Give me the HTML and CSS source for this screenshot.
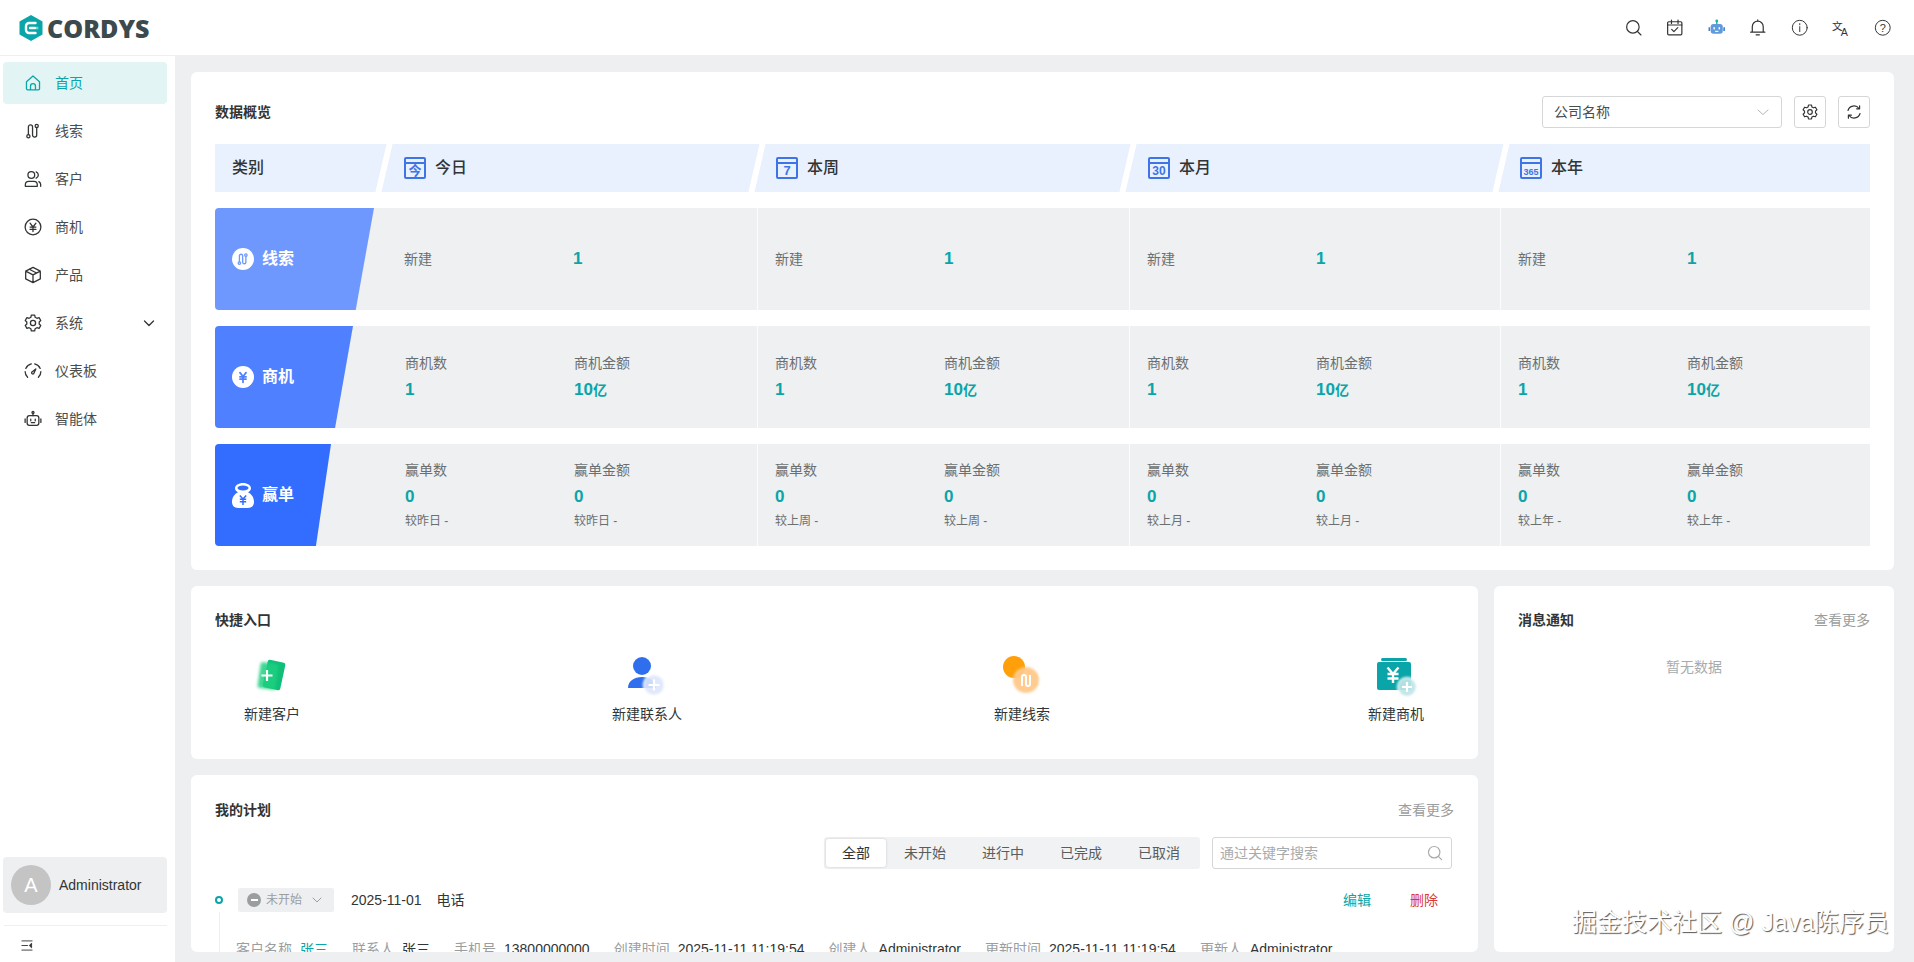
FILE: index.html
```html
<!DOCTYPE html>
<html lang="zh-CN">
<head>
<meta charset="utf-8">
<title>CORDYS</title>
<link rel="stylesheet" href="styles.css">
</head>
<body>
<svg class="sprite" xmlns="http://www.w3.org/2000/svg">
  <symbol id="i-lead" viewBox="0 0 16 16"><path d="M3.900 11.200V4.400a1.850 1.850 0 0 1 3.700 0v7.200a1.850 1.850 0 0 0 3.700 0V5"/><circle cx="3.900" cy="12.700" r="1.400"/><circle cx="11.300" cy="3.500" r="1.400"/></symbol>
  <symbol id="i-yen" viewBox="0 0 16 16"><circle cx="8" cy="8" r="7"/><path d="M5.400 4.600 8 8l2.600-3.400M5.400 8.100h5.200M5.400 10.200h5.200M8 8v4"/></symbol>
  <symbol id="i-gear" viewBox="0 .5 16 16"><path d="M6.500 1.500h3l.4 1.900 1.600.9 1.900-.6 1.500 2.600-1.400 1.300v1.800l1.400 1.300-1.500 2.600-1.900-.6-1.600.9-.4 1.900h-3l-.4-1.900-1.600-.9-1.900.6-1.500-2.600 1.400-1.300V7.600L1.100 6.300l1.500-2.600 1.900.6 1.600-.9z"/><circle cx="8" cy="8.500" r="2.300"/></symbol>
  <symbol id="i-search" viewBox="0 0 16 16"><circle cx="7.200" cy="7.200" r="5.700"/><path d="m11.400 11.400 3.200 3.200"/></symbol>
  <symbol id="i-robot" viewBox="0 0 16 16"><rect x="2.800" y="5" width="10.400" height="8.600" rx="2"/><path d="M8 5V3M1 8v3M15 8v3M6 8.200v1.400M10 8.200v1.400M6.500 11.200h3"/><circle cx="8" cy="2.200" r=".9"/></symbol>
</svg>

<header class="topbar">
  <div class="logo">
    <svg class="logo-mark" viewBox="0 0 24 26"><path class="logo-hex" d="M12 0 23.500 6.500V19.500L12 26 .5 19.500V6.500Z"/><path class="logo-c" d="M16.500 8H10a3 3 0 0 0-3 3v4a3 3 0 0 0 3 3h6.500"/><circle class="logo-dot" cx="18" cy="13" r="1.600"/><path class="logo-c" d="M11 13h5"/></svg>
    <span class="logo-text">CORDYS</span>
  </div>
  <div class="top-icons">
    <svg class="ico ico-top"><use href="#i-search"/></svg>
    <svg class="ico ico-top" viewBox="0 0 16 16"><rect x="1.500" y="2.500" width="13" height="12" rx="1"/><path d="M1.500 5.500h13M5 1v3M11 1v3M5.200 9.500l2 2 3.600-3.600"/></svg>
    <svg class="ico-color" viewBox="0 0 16 16"><path class="bot-antenna" d="M7.300 1.500h1.400v3H7.300z"/><circle class="bot-antenna" cx="8" cy="1.800" r="1.300"/><rect class="bot-head" x="2.500" y="4.500" width="11" height="9" rx="2.500"/><path class="bot-side" d="M.5 7.500h1.500v3.500H.5zM14 7.500h1.500v3.500H14z"/><rect class="bot-face" x="5" y="7.500" width="1.300" height="2"/><rect class="bot-face" x="9.700" y="7.500" width="1.300" height="2"/><rect class="bot-face" x="6.500" y="10.800" width="3" height="1"/></svg>
    <svg class="ico ico-top" viewBox="0 0 16 16"><path d="M3 12V7a5 5 0 0 1 10 0v5M1.500 12h13M6.500 14.500h3M8 .8V2"/></svg>
    <svg class="ico ico-top ico-thin" viewBox="0 0 16 16"><circle cx="8" cy="8" r="6.800"/><path d="M8 7v4.500M8 4.200v1.100"/></svg>
    <svg class="svg-label" viewBox="0 0 18 18"><text class="tr-a" x="0" y="11">文</text><text class="tr-b" x="9" y="17">A</text></svg>
    <svg class="svg-label" viewBox="0 0 16 16"><circle class="help-ring" cx="8" cy="8" r="6.800"/><text class="help-q" x="8" y="11.500">?</text></svg>
  </div>
</header>

<div class="shell">
  <aside class="sidebar">
    <nav class="menu">
      <a class="menu-item is-active">
        <svg class="ico" viewBox="0 0 16 16"><path d="M2.200 6.800 8 1.800l5.800 5v6.400a1 1 0 0 1-1 1H3.200a1 1 0 0 1-1-1zM5.800 14.200v-3.400a2.200 2.200 0 0 1 4.400 0v3.400"/></svg>
        <span>首页</span>
      </a>
      <a class="menu-item"><svg class="ico"><use href="#i-lead"/></svg><span>线索</span></a>
      <a class="menu-item">
        <svg class="ico" viewBox="0 0 16 16"><circle cx="6.500" cy="4.500" r="3"/><path d="M1.200 14.500v-1.300a3 3 0 0 1 3-3h4.600a3 3 0 0 1 3 3v1.300zM10.800 1.700a3 3 0 0 1 0 5.600M14.800 14.500v-1.800a3 3 0 0 0-1.600-2.400"/></svg>
        <span>客户</span>
      </a>
      <a class="menu-item"><svg class="ico"><use href="#i-yen"/></svg><span>商机</span></a>
      <a class="menu-item">
        <svg class="ico" viewBox="0 0 16 16"><path d="M8 1.200 14.500 4.500v7L8 14.800 1.500 11.500v-7zM1.500 4.500 8 7.900l6.500-3.400M8 7.900v6.900M4.700 2.900l6.500 3.300"/></svg>
        <span>产品</span>
      </a>
      <a class="menu-item">
        <svg class="ico"><use href="#i-gear"/></svg><span>系统</span>
        <svg class="ico menu-caret" viewBox="0 0 12 12"><path d="m1.500 4 4.500 4.500L10.500 4"/></svg>
      </a>
      <a class="menu-item">
        <svg class="ico" viewBox="0 0 16 16"><path d="M3.200 13.600A7 7 0 0 1 1 8.500M1.600 5.700A7 7 0 0 1 6.500 1.700M9.500 1.700a7 7 0 0 1 4.900 4M15 8.500a7 7 0 0 1-2.200 5.100M6.800 9.200l3.700-3-1.900 4.300a1.200 1.200 0 0 1-1.800-1.300z"/></svg>
        <span>仪表板</span>
      </a>
      <a class="menu-item"><svg class="ico"><use href="#i-robot"/></svg><span>智能体</span></a>
    </nav>
    <div class="user-box">
      <div class="avatar">A</div>
      <span>Administrator</span>
    </div>
    <div class="collapse">
      <svg class="ico-collapse" viewBox="0 0 12 12"><path d="M0 1h12M0 11h12M0 6h7"/><path d="M11 3.500 8.500 6 11 8.500z"/></svg>
    </div>
  </aside>

  <main class="content">
    <section class="card overview">
      <div class="card-head">
        <h2 class="card-title">数据概览</h2>
        <div class="tools">
          <div class="select"><span>公司名称</span><svg class="ico select-caret" viewBox="0 0 12 12"><path d="m1 4 5 4.500L11 4"/></svg></div>
          <button class="icon-btn"><svg class="ico"><use href="#i-gear"/></svg></button>
          <button class="icon-btn"><svg class="ico" viewBox="0 0 16 16"><path d="M2 6.500A6.200 6.200 0 0 1 13 4.500M14 9.500A6.200 6.200 0 0 1 3 11.500M13.600 1.800v3h-3M2.400 14.200v-3h3"/></svg></button>
        </div>
      </div>

      <div class="range-bar">
        <div class="range range-type">类别</div>
        <div class="range range-today"><svg class="cal" viewBox="0 0 22 22"><rect class="cal-box" x="1" y="1" width="20" height="20" rx="1"/><path class="cal-box" d="M1 6h20"/><text class="cal-text" x="11" y="17.500">今</text></svg>今日</div>
        <div class="range range-mid"><svg class="cal" viewBox="0 0 22 22"><rect class="cal-box" x="1" y="1" width="20" height="20" rx="1"/><path class="cal-box" d="M1 6h20"/><text class="cal-text" x="11" y="18">7</text></svg>本周</div>
        <div class="range range-month"><svg class="cal" viewBox="0 0 22 22"><rect class="cal-box" x="1" y="1" width="20" height="20" rx="1"/><path class="cal-box" d="M1 6h20"/><text class="cal-text cal-sm" x="11" y="17.500">30</text></svg>本月</div>
        <div class="range range-last"><svg class="cal" viewBox="0 0 22 22"><rect class="cal-box" x="1" y="1" width="20" height="20" rx="1"/><path class="cal-box" d="M1 6h20"/><text class="cal-text cal-xs" x="11" y="17.500">365</text></svg>本年</div>
      </div>

      <div class="stat-row">
        <div class="cell cell-first">
          <div class="tag tag-lead"><span class="tag-ico"><svg class="ico ico-blue1"><use href="#i-lead"/></svg></span>线索</div>
          <div class="metric metric-inline"><span class="m-name">新建</span><span class="m-val">1</span></div>
        </div>
        <div class="cell"><div class="metric metric-inline"><span class="m-name">新建</span><span class="m-val">1</span></div></div>
        <div class="cell"><div class="metric metric-inline"><span class="m-name">新建</span><span class="m-val">1</span></div></div>
        <div class="cell cell-end"><div class="metric metric-inline"><span class="m-name">新建</span><span class="m-val">1</span></div></div>
      </div>

      <div class="stat-row">
        <div class="cell cell-first">
          <div class="tag tag-opp"><span class="tag-ico"><svg class="ico ico-blue2" viewBox="0 0 16 16"><path d="M4.500 3 8 7.500 11.500 3M4.500 7.800h7M4.500 10.400h7M8 7.500V14"/></svg></span>商机</div>
          <div class="metric"><span class="m-name">商机数</span><span class="m-val">1</span></div>
          <div class="metric"><span class="m-name">商机金额</span><span class="m-val">10<small>亿</small></span></div>
        </div>
        <div class="cell"><div class="metric"><span class="m-name">商机数</span><span class="m-val">1</span></div><div class="metric"><span class="m-name">商机金额</span><span class="m-val">10<small>亿</small></span></div></div>
        <div class="cell"><div class="metric"><span class="m-name">商机数</span><span class="m-val">1</span></div><div class="metric"><span class="m-name">商机金额</span><span class="m-val">10<small>亿</small></span></div></div>
        <div class="cell cell-end"><div class="metric"><span class="m-name">商机数</span><span class="m-val">1</span></div><div class="metric"><span class="m-name">商机金额</span><span class="m-val">10<small>亿</small></span></div></div>
      </div>

      <div class="stat-row">
        <div class="cell cell-first">
          <div class="tag tag-win"><svg class="bag" viewBox="0 0 22 25"><path class="bag-fill" d="M11 0c4.500 0 8 2.300 8 5.200 0 1.700-1.200 3.100-3 4 3.500 1.700 6 5.300 6 9.600C22 23 19.500 25 16 25H6c-3.500 0-6-2-6-6.200 0-4.300 2.500-7.900 6-9.600-1.800-.9-3-2.300-3-4C3 2.300 6.500 0 11 0z"/><ellipse class="bag-hole" cx="11" cy="5" rx="5.500" ry="2.400"/><path class="bag-cut" d="M7.800 12.500l3.200 3.500 3.200-3.500M7.800 16.200h6.400M7.800 18.700h6.400M11 16v6"/></svg>赢单</div>
          <div class="metric"><span class="m-name">赢单数</span><span class="m-val">0</span><span class="m-cmp">较昨日 -</span></div>
          <div class="metric"><span class="m-name">赢单金额</span><span class="m-val">0</span><span class="m-cmp">较昨日 -</span></div>
        </div>
        <div class="cell"><div class="metric"><span class="m-name">赢单数</span><span class="m-val">0</span><span class="m-cmp">较上周 -</span></div><div class="metric"><span class="m-name">赢单金额</span><span class="m-val">0</span><span class="m-cmp">较上周 -</span></div></div>
        <div class="cell"><div class="metric"><span class="m-name">赢单数</span><span class="m-val">0</span><span class="m-cmp">较上月 -</span></div><div class="metric"><span class="m-name">赢单金额</span><span class="m-val">0</span><span class="m-cmp">较上月 -</span></div></div>
        <div class="cell cell-end"><div class="metric"><span class="m-name">赢单数</span><span class="m-val">0</span><span class="m-cmp">较上年 -</span></div><div class="metric"><span class="m-name">赢单金额</span><span class="m-val">0</span><span class="m-cmp">较上年 -</span></div></div>
      </div>
    </section>

    <div class="lower">
      <div class="lower-main">
        <section class="card quick">
          <h2 class="card-title">快捷入口</h2>
          <div class="quick-list">
            <a class="quick-item">
              <svg class="q-ico" viewBox="0 0 40 40"><rect class="g-back" x="13" y="5" width="18" height="28" rx="2" transform="rotate(12 22 19)"/><rect class="g-front" x="7" y="7" width="18" height="26" rx="2" transform="rotate(8 16 20)"/><path class="q-plus" d="M15 14v11M9.500 19.500h11"/></svg>
              <span>新建客户</span>
            </a>
            <a class="quick-item">
              <svg class="q-ico" viewBox="0 0 40 40"><circle class="b-fill" cx="15" cy="10" r="9"/><path class="b-fill" d="M1 32c0-7 6-11 14-11s14 4 14 11z"/><circle class="b-halo" cx="27" cy="29" r="10.500"/><path class="q-plus" d="M27 23.500v11M21.500 29h11"/></svg>
              <span>新建联系人</span>
            </a>
            <a class="quick-item">
              <svg class="q-ico" viewBox="0 0 40 40"><circle class="o-fill" cx="12" cy="11" r="11"/><circle class="o-glow" cx="24" cy="24" r="13"/><path class="q-lead" d="M20 30V21a2 2 0 0 1 4 0v7a2 2 0 0 0 4 0V19"/></svg>
              <span>新建线索</span>
            </a>
            <a class="quick-item">
              <svg class="q-ico" viewBox="0 0 40 40"><rect class="t-fill" x="5" y="2" width="26" height="3" rx="1.500"/><rect class="t-fill" x="1" y="6" width="34" height="28" rx="2"/><path class="q-yen" d="M11.500 11.500 17 18l5.500-6.500M11.500 18h11M11.500 22.500h11M17 18v9"/><circle class="t-halo" cx="31" cy="31" r="9.500"/><path class="q-plus" d="M31 26v10M26 31h10"/></svg>
              <span>新建商机</span>
            </a>
          </div>
        </section>

        <section class="card plan">
          <div class="plan-head">
            <h2 class="card-title">我的计划</h2>
            <a class="more">查看更多</a>
          </div>
          <div class="plan-tools">
            <div class="tabs">
              <span class="tab tab-on">全部</span>
              <span class="tab">未开始</span>
              <span class="tab">进行中</span>
              <span class="tab">已完成</span>
              <span class="tab">已取消</span>
            </div>
            <div class="search">
              <span>通过关键字搜索</span>
              <svg class="ico"><use href="#i-search"/></svg>
            </div>
          </div>
          <div class="plan-item">
            <div class="plan-line">
              <span class="dot"></span>
              <span class="status"><i class="status-ico"></i>未开始<svg class="ico status-caret" viewBox="0 0 12 12"><path d="m2 4 4 4 4-4"/></svg></span>
              <span class="plan-date">2025-11-01</span>
              <span>电话</span>
              <a class="act act-edit">编辑</a>
              <a class="act act-del">删除</a>
            </div>
            <div class="plan-meta">
              <span class="kv"><em>客户名称</em><b class="link">张三</b></span>
              <span class="kv"><em>联系人</em><b>张三</b></span>
              <span class="kv"><em>手机号</em><b>13800000000</b></span>
              <span class="kv"><em>创建时间</em><b>2025-11-11 11:19:54</b></span>
              <span class="kv"><em>创建人</em><b>Administrator</b></span>
              <span class="kv"><em>更新时间</em><b>2025-11-11 11:19:54</b></span>
              <span class="kv"><em>更新人</em><b>Administrator</b></span>
            </div>
          </div>
        </section>
      </div>

      <section class="card notice">
        <div class="notice-head">
          <h2 class="card-title">消息通知</h2>
          <a class="more">查看更多</a>
        </div>
        <p class="empty">暂无数据</p>
      </section>
    </div>
  </main>
</div>

<div class="watermark">掘金技术社区 @ Java陈序员</div>
</body>
</html>
```

FILE: styles.css
```css
* { box-sizing: border-box; }
html, body { margin: 0; height: 100%; }
body {
  height: 962px;
  overflow: hidden;
  display: flex;
  flex-direction: column;
  background: #edeff0;
  color: #323535;
  font: 14px/22px "Liberation Sans", "Noto Sans CJK SC", sans-serif;
}
h2, p { margin: 0; }
a { color: inherit; }
em { font-style: normal; }
.sprite { display: none; }

.ico { width: 16px; height: 16px; flex: none; fill: none; stroke: currentColor; stroke-width: 1.2; stroke-linecap: round; stroke-linejoin: round; }

/* top bar */
.topbar { height: 56px; flex: none; display: flex; align-items: center; justify-content: space-between; background: #fff; border-bottom: 1px solid #edeff0; padding: 0 23px 0 19px; }
.logo { display: flex; align-items: center; gap: 4px; }
.logo-mark { width: 24px; height: 26px; }
.logo-hex { fill: #0aa5a8; }
.logo-c { fill: none; stroke: #fff; stroke-width: 2.4; stroke-linecap: round; }
.logo-dot { fill: #5fe0c8; }
.logo-text { font: 800 25px/28px "Open Sans", sans-serif; color: #3c494d; }
.top-icons { display: flex; align-items: center; gap: 24px; color: #323535; }
.ico-top { width: 17.500px; height: 17.500px; stroke-width: 1.100; }
.ico-thin { stroke-width: .9; }
.ico-color { width: 17.500px; height: 17.500px; }
.bot-antenna { fill: #22b39c; }
.bot-head { fill: #5f9bdc; }
.bot-side { fill: #3f7fd0; }
.bot-face { fill: #fff; }
.svg-label { width: 17.500px; height: 17.500px; overflow: visible; }
.tr-a { font: 11px "Noto Sans CJK SC", sans-serif; fill: #323535; }
.tr-b { font: 11px "Liberation Sans", sans-serif; fill: #323535; }
.help-ring { fill: none; stroke: #323535; stroke-width: .9; }
.help-q { font: 10px "Liberation Sans", sans-serif; fill: #323535; text-anchor: middle; }

.shell { flex: 1; min-height: 0; display: flex; }

/* sidebar */
.sidebar { width: 175px; flex: none; display: flex; flex-direction: column; background: #fff; padding: 6px 8px 0 3px; }
.menu { display: flex; flex-direction: column; gap: 6px; flex: 1; }
.menu-item { height: 42px; display: flex; align-items: center; gap: 13px; padding: 0 12px 0 21px; border-radius: 4px; color: #4a4d4e; }
.menu-item .ico { width: 18px; height: 18px; color: #323535; stroke-width: 1.150; }
.menu-item.is-active { background: #e3f4f5; color: #0aa5a8; }
.menu-item.is-active .ico { color: #0aa5a8; }
.menu .menu-caret { width: 12px; height: 12px; margin-left: auto; stroke-width: 1.3; }
.user-box { height: 56px; display: flex; align-items: center; gap: 8px; padding-left: 8px; border-radius: 4px; background: #edeff0; color: #323535; }
.avatar { width: 40px; height: 40px; border-radius: 50%; background: #c4c4c4; color: #fff; font-size: 20px; line-height: 40px; text-align: center; }
.collapse { margin-top: 12px; margin-left: 1px; border-top: 1px solid #edeff0; height: 37px; padding: 14px 0 0 17px; }
.ico-collapse { display: block; width: 12px; height: 11px; fill: #323535; stroke: #323535; stroke-width: 1; }

/* content */
.content { flex: 1; min-width: 0; display: flex; flex-direction: column; gap: 16px; padding: 16px 20px 10px 16px; }
.card { background: #fff; border-radius: 6px; }
.card-title { font-size: 14px; font-weight: 600; line-height: 22px; color: #323535; }

.overview { flex: none; height: 498px; padding: 24px; }
.card-head { display: flex; justify-content: space-between; align-items: center; height: 32px; margin-bottom: 16px; }
.tools { display: flex; gap: 12px; }
.select { width: 240px; height: 32px; display: flex; align-items: center; justify-content: space-between; padding: 0 12px 0 11px; background: #fff; border: 1px solid #d4d6d7; border-radius: 3px; color: #4a4d4e; }
.select-caret { width: 12px; height: 12px; color: #b5b8b9; stroke-width: 1; }
.icon-btn { width: 32px; height: 32px; padding: 0; display: flex; align-items: center; justify-content: center; background: #fff; border: 1px solid #d4d6d7; border-radius: 3px; color: #323535; }

.range-bar { display: flex; height: 48px; background: #e9f1fe; margin-bottom: 16px; }
.range { position: relative; display: flex; align-items: center; gap: 9px; padding-left: 20px; font-size: 16px; font-weight: 500; color: #323535; }
.range::after { content: ""; position: absolute; top: 0; right: -3px; width: 6px; height: 100%; background: #fff; transform: skewX(-13deg); }
.range-type { width: 169px; padding-left: 17px; }
.range-today { width: 373px; }
.range-mid { width: 371px; padding-left: 19px; }
.range-month { width: 373px; }
.range-last { flex: 1; padding-left: 19px; }
.range-last::after { display: none; }
.cal { width: 22px; height: 22px; flex: none; }
.cal-box { fill: none; stroke: #3f74e6; stroke-width: 2; }
.cal-text { font: 700 13px "Liberation Sans", "Noto Sans CJK SC", sans-serif; fill: #3f74e6; text-anchor: middle; }
.cal-sm { font-size: 12px; }
.cal-xs { font-size: 9px; }

.stat-row { display: grid; grid-template-columns: 543px 372px 371px 369px; height: 102px; margin-bottom: 16px; background: #eef0f2; border-radius: 4px 0 0 4px; }
.stat-row:last-child { margin-bottom: 0; }
.cell { display: flex; align-items: center; padding-left: 17px; border-right: 1px solid #fbfcfc; }
.cell-first { padding-left: 0; }
.cell-end { border-right: 0; }

.tag { height: 100%; flex: none; display: flex; align-items: center; gap: 8px; padding-left: 17px; font-size: 16px; font-weight: 700; color: #fff; border-radius: 4px 0 0 4px; }
.tag-lead { width: 159px; margin-right: 30px; background: #6f98ff; clip-path: polygon(0 0, 100% 0, 88.500% 100%, 0 100%); }
.tag-opp { width: 138px; margin-right: 52px; background: #4f80ff; clip-path: polygon(0 0, 100% 0, 87% 100%, 0 100%); }
.tag-win { width: 116px; margin-right: 74px; background: #336dff; clip-path: polygon(0 0, 100% 0, 87% 100%, 0 100%); }
.tag-ico { width: 22px; height: 22px; display: flex; align-items: center; justify-content: center; border-radius: 50%; background: #fff; }
.ico-blue1 { width: 14px; height: 14px; color: #6f98ff; stroke-width: 1.500; }
.ico-blue2 { width: 14px; height: 14px; color: #4f80ff; stroke-width: 2; }
.bag { width: 22px; height: 25px; flex: none; }
.bag-fill { fill: #fff; }
.bag-hole { fill: #336dff; }
.bag-cut { fill: none; stroke: #336dff; stroke-width: 1.500; }

.metric { width: 169px; flex: none; display: flex; flex-direction: column; }
.metric-inline { flex-direction: row; align-items: center; }
.metric-inline .m-name { width: 169px; flex: none; }
.m-name { color: #6b6f70; line-height: 22px; }
.m-val { margin-top: 3px; color: #0aa5a8; font-size: 17px; font-weight: 700; line-height: 26px; }
.m-val small { font-size: 14px; }
.metric-inline .m-val { margin-top: 0; }
.m-cmp { margin-top: 1px; color: #6b6f70; font-size: 12px; line-height: 20px; }

/* lower */
.lower { flex: 1; min-height: 0; display: flex; gap: 16px; }
.lower-main { width: 1287px; flex: none; display: flex; flex-direction: column; gap: 16px; }
.quick { flex: none; height: 173px; padding: 23px 24px 0; }
.quick-list { display: flex; gap: 312px; padding: 0 30px 0 29px; margin-top: 25px; }
.quick-item { display: flex; flex-direction: column; align-items: center; gap: 7px; }
.quick-item:last-child { margin-left: auto; }
.q-ico { width: 40px; height: 40px; overflow: visible; }
.g-back { fill: #0fbf77; }
.g-front { fill: #1ed081; opacity: .85; filter: blur(1.500px); }
.q-plus { fill: none; stroke: #fff; stroke-width: 2.200; }
.b-fill { fill: #2f6fed; }
.b-halo { fill: #dfe6fb; opacity: .9; filter: blur(1px); stroke: #fff; stroke-width: 1.500; }
.o-fill { fill: #ff9f0a; }
.o-glow { fill: #ffc98a; opacity: .95; filter: blur(1.200px); }
.q-lead { fill: none; stroke: #fff; stroke-width: 2; }
.t-fill { fill: #0aa5a8; }
.q-yen { fill: none; stroke: #fff; stroke-width: 2.400; }
.t-halo { fill: #bfe5e7; opacity: .92; filter: blur(1px); stroke: #fff; stroke-width: 1.500; }

.plan { flex: 1; min-height: 0; overflow: hidden; padding: 24px 24px 0; }
.plan-head { display: flex; align-items: center; justify-content: space-between; }
.more { color: #9b9e9f; }
.plan-tools { display: flex; justify-content: flex-end; gap: 12px; margin-top: 16px; padding-right: 2px; }
.tabs { display: flex; height: 32px; padding: 2px; background: #f0f2f3; border-radius: 3px; color: #5a5d5e; }
.tab { width: 78px; line-height: 28px; text-align: center; }
.tab-on { width: 60px; background: #fff; border-radius: 3px; color: #323535; box-shadow: 0 0 3px rgba(0, 0, 0, .16); }
.search { width: 240px; height: 32px; display: flex; align-items: center; justify-content: space-between; padding: 0 8px 0 7px; border: 1px solid #d4d6d7; border-radius: 3px; color: #a8abac; }
.plan-item { position: relative; margin-top: 19px; margin-left: 3px; }
.plan-item::before { content: ""; position: absolute; left: 1px; top: 24px; bottom: -60px; width: 1px; background: #eceeef; }
.plan-line { display: flex; align-items: center; height: 24px; }
.dot { width: 8px; height: 8px; border: 2px solid #0aa5a8; border-radius: 50%; margin-left: -3px; margin-right: 15px; flex: none; }
.status { width: 96px; height: 24px; display: flex; align-items: center; gap: 5px; padding-left: 9px; background: #edeff0; border-radius: 2px; color: #9b9e9f; font-size: 12px; }
.status-ico { position: relative; width: 14px; height: 14px; flex: none; border-radius: 50%; background: #9b9e9f; }
.status-ico::after { content: ""; position: absolute; left: 3.500px; top: 6.250px; width: 7px; height: 1.500px; background: #fff; }
.status-caret { width: 12px; height: 12px; margin-left: 4px; stroke-width: 1; }
.plan-date { margin: 0 15px 0 17px; }
.act { width: 28px; }
.act-edit { margin-left: auto; color: #0aa5a8; }
.act-del { margin: 0 16px 0 39px; color: #d9383c; }
.plan-meta { display: flex; gap: 24px; margin-top: 26px; margin-left: 18px; white-space: nowrap; }
.kv { display: flex; gap: 8px; }
.kv em { color: #9b9e9f; }
.kv b { font-weight: 400; color: #323535; }
.kv .link { color: #0aa5a8; }

.notice { flex: 1; padding: 23px 24px; }
.notice-head { display: flex; justify-content: space-between; }
.empty { margin-top: 25px; text-align: center; color: #a8abac; }

.watermark { position: absolute; left: 1572px; top: 905px; font: 400 25px/34px "Liberation Sans", "Noto Sans CJK SC", sans-serif; color: #fff; text-shadow: 1px 1px 1px #555; white-space: nowrap; }
```
